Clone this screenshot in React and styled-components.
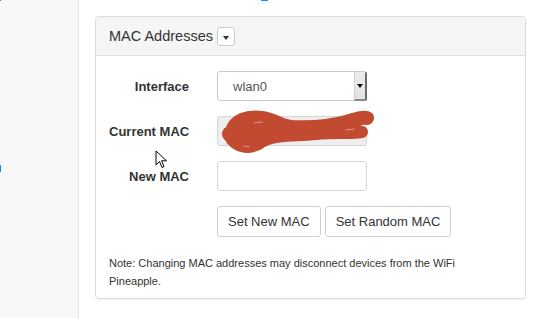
import React from "react";
import styled, { createGlobalStyle } from "styled-components";

const Global = createGlobalStyle`
  html, body { margin: 0; padding: 0; background: #fff; }
  body { font-family: "Liberation Sans", Arial, sans-serif; color: #333; }
  * { box-sizing: border-box; }
`;

const Page = styled.div`
  position: relative;
  display: flex;
  width: 537px;
  height: 318px;
  overflow: hidden;
`;

const Sidebar = styled.div`
  width: 79px;
  flex: none;
  background: #f8f8f8;
  border-right: 1px solid #e6e6e6;
`;

const Main = styled.div`
  flex: 1;
  padding: 16px 0 0 16px;
`;

const Panel = styled.div`
  width: 431px;
  height: 283px;
  border: 1px solid #dcdcdc;
  border-radius: 4px;
  box-shadow: 0 1px 1px rgba(0, 0, 0, 0.05);
  background: #fff;
  overflow: hidden;
`;

const PanelHeader = styled.div`
  display: flex;
  align-items: center;
  gap: 4px;
  height: 39px;
  padding: 0 13px;
  background: #f5f5f5;
  border-bottom: 1px solid #dedede;
`;

const Title = styled.span`
  font-size: 14.5px;
  color: #333;
`;

const CaretButton = styled.span`
  display: inline-flex;
  align-items: center;
  justify-content: center;
  width: 18px;
  height: 19px;
  margin-top: 1px;
  border: 1px solid #ccc;
  border-radius: 3px;
  background: #fff;
  &::after {
    content: "";
    border-left: 3.5px solid transparent;
    border-right: 3.5px solid transparent;
    border-top: 4px solid #333;
    margin-top: 2px;
  }
`;

const PanelBody = styled.div`
  position: relative;
  padding: 15px 13px 0 13px;
`;

const Form = styled.div`
  display: grid;
  grid-template-columns: 80px 150px;
  column-gap: 28px;
  row-gap: 15px;
  align-items: center;
`;

const Label = styled.label`
  text-align: right;
  white-space: nowrap;
  font-weight: bold;
  font-size: 13px;
  color: #333;
`;

const Field = styled.div`
  position: relative;
  height: 30px;
  border: 1px solid ${(p) => (p.$select ? "#c8c8c8" : "#d6d6d6")};
  border-radius: 3px;
  background: ${(p) => (p.$readonly ? "#eeeeee" : "#fff")};
  font-size: 13px;
  color: #555;
  display: flex;
  align-items: center;
  padding-left: 15px;
`;

const SelectArrow = styled.span`
  position: absolute;
  right: -1px;
  top: 0;
  bottom: -1px;
  width: 13px;
  background: linear-gradient(#ececec, #e2e2e2);
  border-left: 1px solid #d0d0d0;
  border-right: 2px solid #6a6a6a;
  border-bottom: 2px solid #8a8a8a;
  border-radius: 0 2px 2px 0;
  display: flex;
  align-items: center;
  justify-content: center;
  &::after {
    content: "";
    border-left: 3px solid transparent;
    border-right: 3px solid transparent;
    border-top: 4px solid #111;
    margin-top: 1px;
  }
`;

const Spacer = styled.div``;

const Buttons = styled.div`
  display: flex;
  gap: 4px;
  white-space: nowrap;
`;

const Button = styled.button`
  height: 31px;
  padding: 0 10px;
  font-family: "Liberation Sans", Arial, sans-serif;
  font-size: 13px;
  color: #333;
  background: #fff;
  border: 1px solid #cfcfcf;
  border-radius: 3px;
`;

const Note = styled.p`
  margin: 17px 0 0 0;
  font-size: 11px;
  line-height: 18px;
  color: #333;
  width: 360px;
`;

const Scribble = styled.svg`
  position: absolute;
  left: 124px;
  top: 52px;
  pointer-events: none;
`;

const Cursor = styled.svg`
  position: absolute;
  left: 155px;
  top: 150px;
`;

const Mark = styled.span`
  position: absolute;
  background: #0a97f0;
  left: ${(p) => p.$x}px;
  top: ${(p) => p.$y}px;
  width: ${(p) => p.$w}px;
  height: ${(p) => p.$h}px;
`;

export default function App() {
  return (
    <>
      <Global />
      <Page>
        <Sidebar />
        <Main>
          <Panel>
            <PanelHeader>
              <Title>MAC Addresses</Title>
              <CaretButton />
            </PanelHeader>
            <PanelBody>
              <Form>
                <Label>Interface</Label>
                <Field $select>
                  wlan0
                  <SelectArrow />
                </Field>
                <Label>Current MAC</Label>
                <Field $readonly />
                <Label>New MAC</Label>
                <Field />
                <Spacer />
                <Buttons>
                  <Button>Set New MAC</Button>
                  <Button>Set Random MAC</Button>
                </Buttons>
              </Form>
              <Note>
                Note: Changing MAC addresses may disconnect devices from the WiFi
                Pineapple.
              </Note>
              <Scribble width="160" height="46" viewBox="0 0 160 46">
                <g fill="none" stroke="#c24a31" strokeLinecap="round" strokeLinejoin="round">
                  <path d="M12 24 C 14 12, 28 8, 42 10 C 56 12, 60 18, 72 19 C 92 20, 112 18, 126 14 C 136 11, 142 9, 147 10" strokeWidth="14" />
                  <path d="M12 32 C 20 39, 35 38, 48 31 C 60 27, 76 28, 96 26 C 116 24, 132 26, 142 24" strokeWidth="12" />
                  <path d="M22 16 C 32 8, 46 10, 54 16 C 60 22, 44 30, 28 28" strokeWidth="14" />
                  <path d="M10 26 L 60 24" strokeWidth="16" />
                  <path d="M118 22 C 130 17, 140 19, 143 23 C 138 28, 125 28, 116 25" strokeWidth="7" />
                  <path d="M14 36 C 22 42, 30 42, 40 37" strokeWidth="9" />
                </g>
                <g fill="none" stroke="#de9684" strokeLinecap="round" strokeWidth="1">
                  <path d="M34 15 L 42 14" />
                  <path d="M24 38 L 29 39" />
                  <path d="M126 22 L 134 21" />
                </g>
              </Scribble>
            </PanelBody>
          </Panel>
        </Main>
        <Cursor width="13" height="20" viewBox="0 0 13 20">
          <path d="M1 1 L1 15 L4.5 11.5 L7 17.5 L9 16.6 L6.6 10.8 L11.5 10.8 Z" fill="#fff" stroke="#000" strokeWidth="1" strokeLinejoin="round" />
        </Cursor>
        <Mark $x={0} $y={0} $w={1} $h={1} />
        <Mark $x={261} $y={0} $w={7} $h={1} />
        <Mark $x={0} $y={165} $w={1} $h={7} />
      </Page>
    </>
  );
}
